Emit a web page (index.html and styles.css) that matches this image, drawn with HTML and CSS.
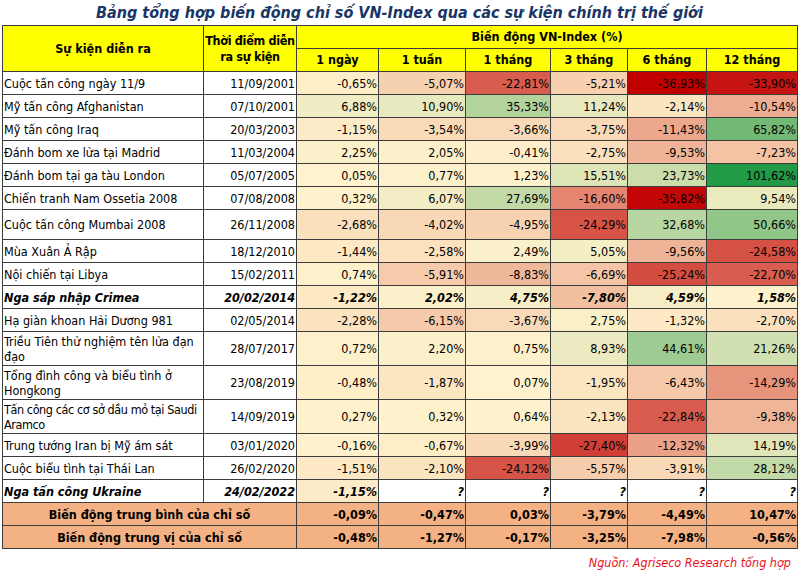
FILE: index.html
```html
<!DOCTYPE html>
<html lang="vi">
<head>
<meta charset="utf-8">
<link rel="stylesheet" href="styles.css">
</head>
<body>
<div class="page">
  <h1 class="title">Bảng tổng hợp biến động chỉ số VN-Index qua các sự kiện chính trị thế giới</h1>
  <table class="tbl">
    <colgroup>
      <col class="w-ev"><col class="w-dt"><col class="w-1d"><col class="w-1w"><col class="w-1m"><col class="w-3m"><col class="w-6m"><col class="w-12m">
    </colgroup>
    <thead>
      <tr class="h">
        <th rowspan="2">Sự kiện diễn ra</th>
        <th rowspan="2" class="tight">Thời điểm diễn<br>ra sự kiện</th>
        <th colspan="6">Biến động VN-Index (%)</th>
      </tr>
      <tr class="h">
        <th>1 ngày</th><th>1 tuần</th><th>1 tháng</th><th>3 tháng</th><th>6 tháng</th><th>12 tháng</th>
      </tr>
    </thead>
    <tbody>
      <tr class="r"><td class="ev">Cuộc tấn công ngày 11/9</td><td class="dt">11/09/2001</td>
        <td class="c" style="--v:-0.65">-0,65%</td><td class="c" style="--v:-5.07">-5,07%</td><td class="c" style="--v:-22.81">-22,81%</td><td class="c" style="--v:-5.21">-5,21%</td><td class="c" style="--v:-36.93">-36,93%</td><td class="c" style="--v:-33.90">-33,90%</td></tr>
      <tr class="r"><td class="ev">Mỹ tấn công Afghanistan</td><td class="dt">07/10/2001</td>
        <td class="c" style="--v:6.88">6,88%</td><td class="c" style="--v:10.90">10,90%</td><td class="c" style="--v:35.33">35,33%</td><td class="c" style="--v:11.24">11,24%</td><td class="c" style="--v:-2.14">-2,14%</td><td class="c" style="--v:-10.54">-10,54%</td></tr>
      <tr class="r"><td class="ev">Mỹ tấn công Iraq</td><td class="dt">20/03/2003</td>
        <td class="c" style="--v:-1.15">-1,15%</td><td class="c" style="--v:-3.54">-3,54%</td><td class="c" style="--v:-3.66">-3,66%</td><td class="c" style="--v:-3.75">-3,75%</td><td class="c" style="--v:-11.43">-11,43%</td><td class="c" style="--v:65.82">65,82%</td></tr>
      <tr class="r"><td class="ev">Đánh bom xe lửa tại Madrid</td><td class="dt">11/03/2004</td>
        <td class="c" style="--v:2.25">2,25%</td><td class="c" style="--v:2.05">2,05%</td><td class="c" style="--v:-0.41">-0,41%</td><td class="c" style="--v:-2.75">-2,75%</td><td class="c" style="--v:-9.53">-9,53%</td><td class="c" style="--v:-7.23">-7,23%</td></tr>
      <tr class="r"><td class="ev">Đánh bom tại ga tàu London</td><td class="dt">05/07/2005</td>
        <td class="c" style="--v:0.05">0,05%</td><td class="c" style="--v:0.77">0,77%</td><td class="c" style="--v:1.23">1,23%</td><td class="c" style="--v:15.51">15,51%</td><td class="c" style="--v:23.73">23,73%</td><td class="c" style="--v:101.62">101,62%</td></tr>
      <tr class="r"><td class="ev">Chiến tranh Nam Ossetia 2008</td><td class="dt">07/08/2008</td>
        <td class="c" style="--v:0.32">0,32%</td><td class="c" style="--v:6.07">6,07%</td><td class="c" style="--v:27.69">27,69%</td><td class="c" style="--v:-16.60">-16,60%</td><td class="c" style="--v:-35.82">-35,82%</td><td class="c" style="--v:9.54">9,54%</td></tr>
      <tr class="r tall"><td class="ev">Cuộc tấn công Mumbai 2008</td><td class="dt">26/11/2008</td>
        <td class="c" style="--v:-2.68">-2,68%</td><td class="c" style="--v:-4.02">-4,02%</td><td class="c" style="--v:-4.95">-4,95%</td><td class="c" style="--v:-24.29">-24,29%</td><td class="c" style="--v:32.68">32,68%</td><td class="c" style="--v:50.66">50,66%</td></tr>
      <tr class="r"><td class="ev">Mùa Xuân Ả Rập</td><td class="dt">18/12/2010</td>
        <td class="c" style="--v:-1.44">-1,44%</td><td class="c" style="--v:-2.58">-2,58%</td><td class="c" style="--v:2.49">2,49%</td><td class="c" style="--v:5.05">5,05%</td><td class="c" style="--v:-9.56">-9,56%</td><td class="c" style="--v:-24.58">-24,58%</td></tr>
      <tr class="r"><td class="ev">Nội chiến tại Libya</td><td class="dt">15/02/2011</td>
        <td class="c" style="--v:0.74">0,74%</td><td class="c" style="--v:-5.91">-5,91%</td><td class="c" style="--v:-8.83">-8,83%</td><td class="c" style="--v:-6.69">-6,69%</td><td class="c" style="--v:-25.24">-25,24%</td><td class="c" style="--v:-22.70">-22,70%</td></tr>
      <tr class="r em"><td class="ev">Nga sáp nhập Crimea</td><td class="dt">20/02/2014</td>
        <td class="c" style="--v:-1.22">-1,22%</td><td class="c" style="--v:2.02">2,02%</td><td class="c" style="--v:4.75">4,75%</td><td class="c" style="--v:-7.80">-7,80%</td><td class="c" style="--v:4.59">4,59%</td><td class="c" style="--v:1.58">1,58%</td></tr>
      <tr class="r"><td class="ev">Hạ giàn khoan Hải Dương 981</td><td class="dt">02/05/2014</td>
        <td class="c" style="--v:-2.28">-2,28%</td><td class="c" style="--v:-6.15">-6,15%</td><td class="c" style="--v:-3.67">-3,67%</td><td class="c" style="--v:2.75">2,75%</td><td class="c" style="--v:-1.32">-1,32%</td><td class="c" style="--v:-2.70">-2,70%</td></tr>
      <tr class="r two"><td class="ev">Triều Tiên thử nghiệm tên lửa đạn đạo</td><td class="dt">28/07/2017</td>
        <td class="c" style="--v:0.72">0,72%</td><td class="c" style="--v:2.20">2,20%</td><td class="c" style="--v:0.75">0,75%</td><td class="c" style="--v:8.93">8,93%</td><td class="c" style="--v:44.61">44,61%</td><td class="c" style="--v:21.26">21,26%</td></tr>
      <tr class="r two"><td class="ev">Tổng đình công và biểu tình ở Hongkong</td><td class="dt">23/08/2019</td>
        <td class="c" style="--v:-0.48">-0,48%</td><td class="c" style="--v:-1.87">-1,87%</td><td class="c" style="--v:0.07">0,07%</td><td class="c" style="--v:-1.95">-1,95%</td><td class="c" style="--v:-6.43">-6,43%</td><td class="c" style="--v:-14.29">-14,29%</td></tr>
      <tr class="r two"><td class="ev tight">Tấn công các cơ sở dầu mỏ tại Saudi Aramco</td><td class="dt">14/09/2019</td>
        <td class="c" style="--v:0.27">0,27%</td><td class="c" style="--v:0.32">0,32%</td><td class="c" style="--v:0.64">0,64%</td><td class="c" style="--v:-2.13">-2,13%</td><td class="c" style="--v:-22.84">-22,84%</td><td class="c" style="--v:-9.38">-9,38%</td></tr>
      <tr class="r"><td class="ev">Trung tướng Iran bị Mỹ ám sát</td><td class="dt">03/01/2020</td>
        <td class="c" style="--v:-0.16">-0,16%</td><td class="c" style="--v:-0.67">-0,67%</td><td class="c" style="--v:-3.99">-3,99%</td><td class="c" style="--v:-27.40">-27,40%</td><td class="c" style="--v:-12.32">-12,32%</td><td class="c" style="--v:14.19">14,19%</td></tr>
      <tr class="r"><td class="ev">Cuộc biểu tình tại Thái Lan</td><td class="dt">26/02/2020</td>
        <td class="c" style="--v:-1.51">-1,51%</td><td class="c" style="--v:-2.10">-2,10%</td><td class="c" style="--v:-24.12">-24,12%</td><td class="c" style="--v:-5.57">-5,57%</td><td class="c" style="--v:-3.91">-3,91%</td><td class="c" style="--v:28.12">28,12%</td></tr>
      <tr class="r em"><td class="ev">Nga tấn công Ukraine</td><td class="dt">24/02/2022</td>
        <td class="c" style="--v:-1.15">-1,15%</td><td class="q">?</td><td class="q">?</td><td class="q">?</td><td class="q">?</td><td class="q">?</td></tr>
    </tbody>
    <tfoot>
      <tr class="r f"><td colspan="2" class="lbl">Biến động trung bình của chỉ số</td>
        <td>-0,09%</td><td>-0,47%</td><td>0,03%</td><td>-3,79%</td><td>-4,49%</td><td>10,47%</td></tr>
      <tr class="r f"><td colspan="2" class="lbl">Biến động trung vị của chỉ số</td>
        <td>-0,48%</td><td>-1,27%</td><td>-0,17%</td><td>-3,25%</td><td>-7,98%</td><td>-0,56%</td></tr>
    </tfoot>
  </table>
  <p class="src">Nguồn: Agriseco Research tổng hợp</p>
</div>
</body>
</html>
```

FILE: styles.css
```css
html, body {
  margin: 0;
  padding: 0;
  background: #ffffff;
}

.page {
  width: 800px;
  padding: 0 3px 0 2px;
  box-sizing: border-box;
  font-family: "DejaVu Sans Condensed", "DejaVu Sans", sans-serif;
  color: #000;
}

.title {
  margin: 0;
  height: 25px;
  line-height: 26px;
  text-align: center;
  font-size: 16px;
  font-weight: bold;
  font-style: italic;
  color: #1B3566;
}

.tbl {
  border-collapse: collapse;
  table-layout: fixed;
  width: 795px;
  font-size: 12.5px;
}

.w-ev { width: 201px; }
.w-dt { width: 93px; }
.w-1d { width: 82px; }
.w-1w { width: 87px; }
.w-1m { width: 85px; }
.w-3m { width: 77px; }
.w-6m { width: 79px; }
.w-12m { width: 91px; }

.tbl th, .tbl td {
  border: 1px solid #3c3c3c;
  padding: 0 1px;
  overflow: hidden;
  white-space: nowrap;
}

.h th {
  background: #FFFF00;
  font-weight: bold;
  text-align: center;
  height: 22px;
  line-height: 16px;
}

.h th.tight {
  letter-spacing: -0.3px;
  padding: 0;
}

.r td {
  height: 22px;
  line-height: 15px;
  text-align: right;
  vertical-align: middle;
}

.r.tall td { height: 29px; }
.r.two td { height: 33px; }
.r.two td.ev { white-space: normal; }

.r td.ev {
  text-align: left;
}

.r td.ev.tight {
  letter-spacing: -0.4px;
}

.c {
  background: color-mix(in srgb,
    #C00000 clamp(0%, calc(var(--v) * -100% / 36.93), 100%),
    color-mix(in srgb, #239A45 clamp(0%, calc(var(--v) * 100% / 101.62), 100%), #FFF2CC));
}

.em td {
  font-weight: bold;
  font-style: italic;
}

.q {
  background: #ffffff;
}

.f td {
  background: #F4B183;
  font-weight: bold;
}

.f td.lbl {
  text-align: center;
}

.src {
  margin: 6px 6px 0 0;
  text-align: right;
  font-size: 12.5px;
  font-style: italic;
  color: #E8101A;
}
```
